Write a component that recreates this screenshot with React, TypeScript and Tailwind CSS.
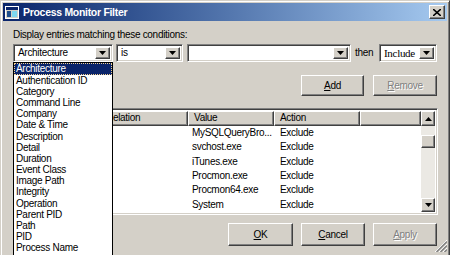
import React from 'react';

const raised =
  'border border-t-white border-l-white border-r-[#404040] border-b-[#404040] shadow-[inset_-1px_-1px_#808080,inset_1px_1px_#d4d0c8]';
const sunken =
  'border border-t-[#808080] border-l-[#808080] border-r-white border-b-white shadow-[inset_1px_1px_#404040,inset_-1px_-1px_#d4d0c8]';

const fields = [
  'Architecture',
  'Authentication ID',
  'Category',
  'Command Line',
  'Company',
  'Date & Time',
  'Description',
  'Detail',
  'Duration',
  'Event Class',
  'Image Path',
  'Integrity',
  'Operation',
  'Parent PID',
  'Path',
  'PID',
  'Process Name',
];

const rules = [
  { value: 'MySQLQueryBro...', action: 'Exclude' },
  { value: 'svchost.exe', action: 'Exclude' },
  { value: 'iTunes.exe', action: 'Exclude' },
  { value: 'Procmon.exe', action: 'Exclude' },
  { value: 'Procmon64.exe', action: 'Exclude' },
  { value: 'System', action: 'Exclude' },
];

function Arrow({ up = false }: { up?: boolean }) {
  return (
    <svg width="7" height="4" viewBox="0 0 7 4" className={up ? 'rotate-180' : ''}>
      <path d="M0 0h7L3.5 4z" fill="#000" />
    </svg>
  );
}

function Combo({ value, width, serif = false }: { value: string; width: string; serif?: boolean }) {
  return (
    <div className={`${sunken} ${width} h-[18px] bg-white flex items-center p-[2px]`}>
      <span className={`flex-1 pl-[2px] truncate ${serif ? "font-['Liberation_Serif',serif] text-[11px]" : ''}`}>
        {value}
      </span>
      <div className={`${raised} w-[15px] h-full bg-[#d4d0c8] flex items-center justify-center`}>
        <Arrow />
      </div>
    </div>
  );
}

function Button({ label, ul, disabled = false, width = 'w-[64px]', height = 'h-[21px]' }: { label: string; ul: number; disabled?: boolean; width?: string; height?: string }) {
  return (
    <div className={`${raised} ${width} ${height} bg-[#d4d0c8] flex items-center justify-center`}>
      <span className={disabled ? 'text-[#808080] [text-shadow:1px_1px_0_#fff]' : ''}>
        {label.slice(0, ul)}
        <span className="underline underline-offset-[1px]">{label[ul]}</span>
        {label.slice(ul + 1)}
      </span>
    </div>
  );
}

export default function App() {
  return (
    <div className="w-[450px] h-[255px] overflow-hidden bg-white font-['Liberation_Sans',Arial,sans-serif] text-[10px] tracking-[-0.3px] text-black leading-none">
      <div className="relative w-[450px] h-[258px] bg-[#d4d0c8] border border-t-[#d4d0c8] border-l-[#d4d0c8] border-r-[#404040] border-b-[#404040] shadow-[inset_1px_1px_#fff,inset_-1px_-1px_#808080] p-[2px] flex flex-col">
        {/* Title bar */}
        <div className="h-[18px] bg-gradient-to-r from-[#0a246a] to-[#a6caf0] flex items-center pl-[2px] pr-[2px]">
          <svg width="14" height="13" viewBox="0 0 14 13" className="mr-[4px]">
            <rect x="0.5" y="0.5" width="13" height="12" fill="#d4d0c8" stroke="#fff" />
            <rect x="1" y="1" width="12" height="3" fill="#0a246a" />
            <rect x="2" y="5" width="4" height="6" fill="#1e4d8c" />
            <rect x="7" y="5" width="5" height="6" fill="#7fd8f0" />
          </svg>
          <span className="flex-1 text-white font-bold text-[10.5px] tracking-[-0.3px]">Process Monitor Filter</span>
          <div className={`${raised} w-[16px] h-[14px] bg-[#d4d0c8] flex items-center justify-center`}>
            <svg width="8" height="7" viewBox="0 0 8 7">
              <path d="M0 0l8 7M8 0L0 7" stroke="#000" strokeWidth="1.6" />
            </svg>
          </div>
        </div>

        <div className="flex-1 flex flex-col pl-[10px] pr-[9px]">
          <div className="mt-[9px] h-[12px]">Display entries matching these conditions:</div>

          {/* Condition row */}
          <div className="relative mt-[2px] flex items-center">
            <Combo value="Architecture" width="w-[100px]" />
            <div className="ml-[3px]">
              <Combo value="is" width="w-[67px]" />
            </div>
            <div className="ml-[4px]">
              <Combo value="" width="w-[164px]" />
            </div>
            <span className="ml-[4px] w-[24px]">then</span>
            <Combo value="Include" width="w-[58px]" serif />

            {/* Open dropdown list */}
            <div className="absolute left-0 top-[18px] w-[100px] h-[200px] bg-white border border-black z-10 flex flex-col">
              {fields.map((f, i) => (
                <div
                  key={f}
                  className={`shrink-0 pl-[2px] flex items-center whitespace-nowrap ${
                    i === 0
                      ? 'h-[12px] bg-[#0a246a] text-white outline outline-1 outline-dotted outline-[#f0d090] -outline-offset-1'
                      : 'h-[11.2px]'
                  }`}
                >
                  {f}
                </div>
              ))}
            </div>
          </div>

          {/* Add / Remove */}
          <div className="mt-[13px] flex justify-end gap-[9px] pr-[1px]">
            <Button label="Add" ul={0} width="w-[63px]" />
            <Button label="Remove" ul={0} disabled />
          </div>

          {/* Rules table */}
          <div className={`${sunken} mt-[12px] h-[107px] bg-white p-[2px] flex`}>
            <div className="flex-1 flex flex-col min-w-0">
              <div className="flex h-[15px] bg-[#d4d0c8]">
                {[
                  ['', 'w-[84px]'],
                  ['Relation', 'w-[88px]'],
                  ['Value', 'w-[86px]'],
                  ['Action', 'w-[86px]'],
                  ['', 'flex-1'],
                ].map(([h, w], i) => (
                  <div key={i} className={`${raised} ${w} h-full flex items-center pl-[5px]`}>
                    {h}
                  </div>
                ))}
              </div>
              {rules.map((r, i) => (
                <div key={i} className="flex h-[14.5px] items-center">
                  <div className="w-[172px]" />
                  <div className="w-[86px] pl-[4px] pr-[2px] whitespace-nowrap">{r.value}</div>
                  <div className="w-[86px] pl-[6px]">{r.action}</div>
                </div>
              ))}
            </div>
            {/* Scrollbar */}
            <div className="w-[14px] flex flex-col bg-[#ebe9e4]">
              <div className={`${raised} h-[15px] bg-[#d4d0c8] flex items-center justify-center`}>
                <Arrow up />
              </div>
              <div className="flex-1 pt-[9px]">
                <div className={`${raised} h-[13px] bg-[#d4d0c8]`} />
              </div>
              <div className={`${raised} h-[14px] bg-[#d4d0c8] flex items-center justify-center`}>
                <Arrow />
              </div>
            </div>
          </div>

          {/* Dialog buttons */}
          <div className="mt-[8px] flex justify-end gap-[8px] pr-[1px]">
            <Button label="OK" ul={0} width="w-[65px]" height="h-[23px]" />
            <Button label="Cancel" ul={0} width="w-[64px]" height="h-[23px]" />
            <Button label="Apply" ul={0} disabled width="w-[64px]" height="h-[23px]" />
          </div>
        </div>

        {/* Size grip */}
        <svg width="12" height="12" viewBox="0 0 12 12" className="absolute right-[2px] bottom-[5px]">
          {[0, 4, 8].map((o) => (
            <g key={o}>
              <path d={`M${o} 12L12 ${o}`} stroke="#fff" strokeWidth="1" />
              <path d={`M${o + 1.5} 12L12 ${o + 1.5}`} stroke="#808080" strokeWidth="1.4" />
            </g>
          ))}
        </svg>
      </div>
    </div>
  );
}
